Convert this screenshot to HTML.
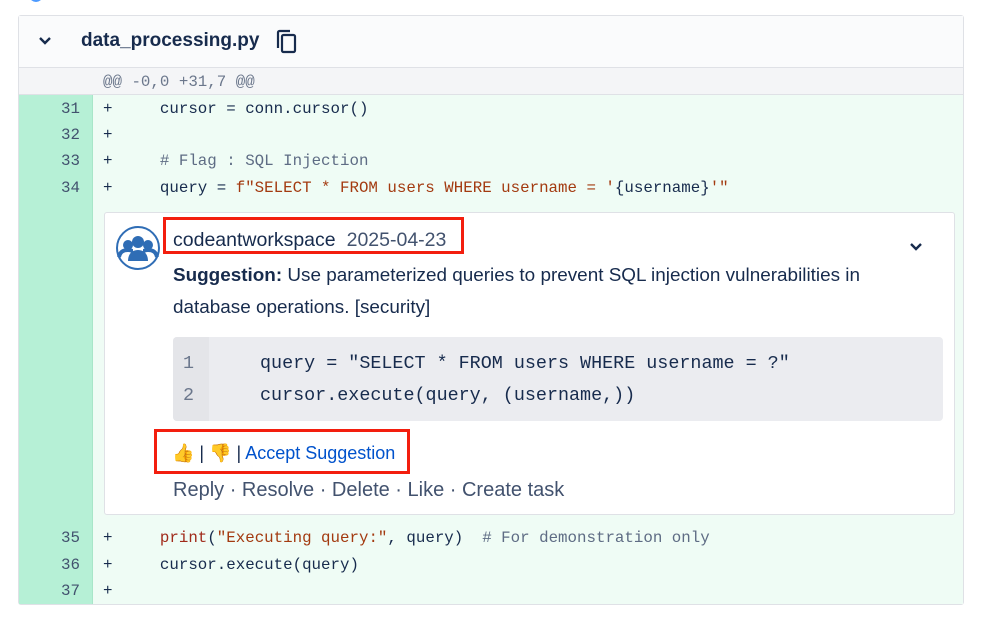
<!DOCTYPE html>
<html><head><meta charset="utf-8"><style>
*{margin:0;padding:0;box-sizing:border-box}
body{width:999px;height:625px;background:#fff;position:relative;overflow:hidden;font-family:"Liberation Sans",sans-serif;color:#172b4d}
.a{position:absolute;white-space:pre}
.m{font-family:"Liberation Mono",monospace;font-size:15.8px;color:#172b4d}
.ln{position:absolute;left:18px;width:74px;text-align:right;padding-right:12px;font-family:"Liberation Mono",monospace;font-size:15.8px;color:#42526e}
.s{color:#a33a10}
.c{color:#5e6c84}
</style></head><body>
<div class="a" style="left:30px;top:-8px;width:12px;height:10px;border-radius:50%;background:#4c9aff"></div>
<div class="a" style="left:18px;top:15px;width:946px;height:590px;border:1px solid #dfe1e6;border-radius:3px;background:#fff"></div>
<div class="a" style="left:19px;top:16px;width:944px;height:52px;background:#fafbfc;border-bottom:1px solid #dfe1e6"></div>
<svg class="a" style="left:38px;top:36px" width="14" height="10" viewBox="0 0 14 10"><path d="M2 2l5 5 5-5" stroke="#172b4d" stroke-width="2.4" fill="none"/></svg>
<div class="a" style="left:81px;top:30px;font-size:19px;font-weight:bold;color:#172b4d">data_processing.py</div>
<svg class="a" style="left:276px;top:29px" width="22" height="26" viewBox="0 0 22 26"><rect x="6" y="6" width="13" height="17" rx="1.5" stroke="#172b4d" stroke-width="2.2" fill="none"/><path d="M2 19V3.5A1.5 1.5 0 0 1 3.5 2H14" stroke="#172b4d" stroke-width="2.2" fill="none"/></svg>
<div class="a" style="left:19px;top:68px;width:944px;height:27px;background:#f4f5f7;border-bottom:1px solid #dfe1e6"></div>
<div class="a m" style="left:103px;top:73px;color:#6b778c">@@ -0,0 +31,7 @@</div>
<div class="a" style="left:19px;top:95px;width:73px;height:509px;background:#b6f0d6"></div>
<div class="a" style="left:92px;top:95px;width:871px;height:509px;background:#effcf5;border-left:1px solid #a8e6c9"></div>
<div class="ln" style="top:100px">31</div><div class="a m" style="left:103px;top:100px">+     cursor = conn.cursor()</div>
<div class="ln" style="top:126px">32</div><div class="a m" style="left:103px;top:126px">+</div>
<div class="ln" style="top:152px">33</div><div class="a m" style="left:103px;top:152px">+     <span class="c"># Flag : SQL Injection</span></div>
<div class="ln" style="top:179px">34</div><div class="a m" style="left:103px;top:179px">+     query = <span class="s">f"SELECT * FROM users WHERE username = '</span>{username}<span class="s">'"</span></div>
<div class="a" style="left:104px;top:212px;width:851px;height:303px;background:#fff;border:1px solid #dfe1e6;border-radius:3px"></div>
<svg class="a" style="left:116px;top:226px" width="44" height="44" viewBox="0 0 44 44"><circle cx="22" cy="22" r="21" fill="#fff" stroke="#2f6db5" stroke-width="2"/><circle cx="22" cy="16" r="6" fill="#2f6db5"/><circle cx="12" cy="19" r="5" fill="#2f6db5"/><circle cx="32" cy="19" r="5" fill="#2f6db5"/><path d="M12 35c0-7 4-11 10-11s10 4 10 11z" fill="#2f6db5"/><path d="M3 31c1-5 4-7 9-7 3 0 4 1 5 1M41 31c-1-5-4-7-9-7-3 0-4 1-5 1" stroke="#2f6db5" stroke-width="4" fill="none"/></svg>
<div class="a" style="left:163px;top:217px;width:301px;height:37px;border:3px solid #f31e0e"></div>
<div class="a" style="left:173px;top:229px;font-size:19.5px;color:#172b4d">codeantworkspace<span style="color:#42526e;margin-left:11px">2025-04-23</span></div>
<svg class="a" style="left:909px;top:242px" width="14" height="10" viewBox="0 0 14 10"><path d="M2 2l5 5 5-5" stroke="#172b4d" stroke-width="2.4" fill="none"/></svg>
<div class="a" style="left:173px;top:260px;font-size:18.9px;line-height:32px;white-space:normal;width:740px"><b>Suggestion:</b> Use parameterized queries to prevent SQL injection vulnerabilities in database operations. [security]</div>
<div class="a" style="left:173px;top:337px;width:770px;height:84px;background:#ebecf0;border-radius:4px"></div>
<div class="a" style="left:173px;top:337px;width:36px;height:84px;background:#e4e5e9;border-radius:4px 0 0 4px"></div>
<div class="a" style="left:183px;top:348px;font-family:'Liberation Mono',monospace;font-size:18.4px;line-height:32px;color:#6b778c">1
2</div>
<div class="a" style="left:260px;top:348px;font-family:'Liberation Mono',monospace;font-size:18.4px;line-height:32px;color:#172b4d">query = "SELECT * FROM users WHERE username = ?"
cursor.execute(query, (username,))</div>
<div class="a" style="left:154px;top:429px;width:256px;height:45px;border:3px solid #f31e0e"></div>
<div class="a" style="left:172px;top:443px;font-size:18px;color:#172b4d">👍 | 👎 | <span style="color:#0052cc">Accept Suggestion</span></div>
<div class="a" style="left:173px;top:479px;font-size:20px;color:#42526e">Reply · Resolve · Delete · Like · Create task</div>
<div class="ln" style="top:529px">35</div><div class="a m" style="left:103px;top:529px">+     <span style="color:#a02a1a">print</span>(<span class="s">"Executing query:"</span>, query)  <span class="c"># For demonstration only</span></div>
<div class="ln" style="top:556px">36</div><div class="a m" style="left:103px;top:556px">+     cursor.execute(query)</div>
<div class="ln" style="top:582px">37</div><div class="a m" style="left:103px;top:582px">+</div>
</body></html>
